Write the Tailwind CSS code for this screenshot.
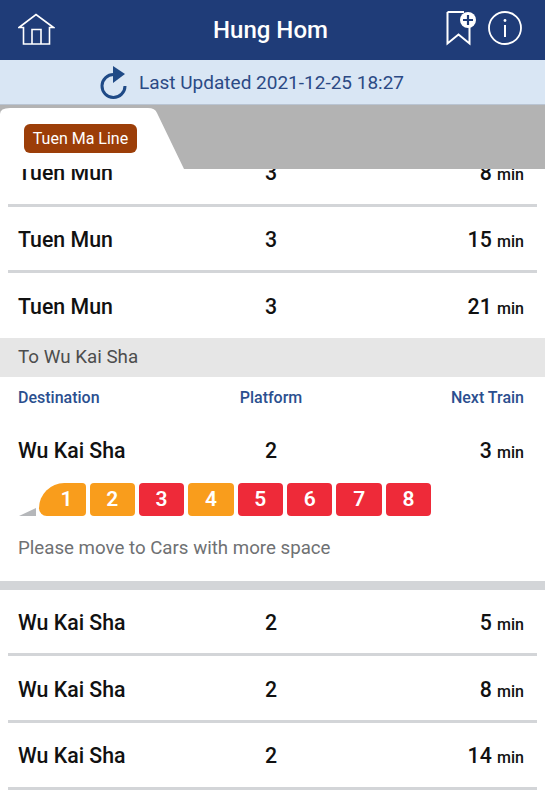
<!DOCTYPE html>
<html lang="en">
<head>
  <meta charset="UTF-8" />
  <meta name="viewport" content="width=device-width, initial-scale=1.0" />
  <title>Hung Hom</title>
  <script src="https://cdn.jsdelivr.net/npm/@tailwindcss/browser@4"></script>
</head>
<body class="bg-white font-[Roboto,sans-serif] w-[545px] h-[800px] overflow-hidden">
  <!-- header -->
  <div class="h-[60px] bg-[#1f3c78] flex items-center justify-between pl-[18px] pr-[23px] relative">
    <svg class="w-[37px] h-[33px] mb-[2px]" viewBox="0 0 37 33" fill="none" stroke="white" stroke-width="1.600">
      <path d="M1 14.500 18 1.500 35.500 14.500H31.500V31H5.500V14.500H1Z" />
      <path d="M14 31V16.500H23V31" />
    </svg>
    <div class="absolute inset-x-0 pr-[4px] text-center text-white text-[24px] font-medium">Hung Hom</div>
    <div class="flex items-center gap-[10px] mb-[4px]">
      <svg class="w-[32px] h-[36px]" viewBox="0 0 32 36" fill="none">
        <path d="M1.500 2H18M23.500 14V33.500L12.500 24.500 1.500 33.500V2" stroke="white" stroke-width="2" />
        <circle cx="22" cy="10" r="8" fill="white" />
        <path d="M22 5V15M17 10H27" stroke="#1f3c78" stroke-width="2.200" />
      </svg>
      <svg class="w-[34px] h-[34px]" viewBox="0 0 34 34" fill="none">
        <circle cx="17" cy="17" r="16" stroke="white" stroke-width="1.800" />
        <circle cx="17" cy="9.500" r="1.400" fill="white" />
        <path d="M17 14V26" stroke="white" stroke-width="2" />
      </svg>
    </div>
  </div>

  <!-- last updated -->
  <div class="h-[45px] bg-[#d9e6f4] flex items-center pl-[99px] gap-[10px] text-[#2b4a85] text-[19px] border-b border-[#b9c4d2]">
    <svg class="w-[30px] h-[35px]" viewBox="0 0 30 35" fill="none">
      <path d="M15 9.500A11.500 11.500 0 1 0 26 21" stroke="#1f4a86" stroke-width="3" />
      <path d="M14 1 26 9 14 18Z" fill="#1f4a86" />
    </svg>
    <span class="pt-[2px]">Last Updated 2021-12-25 18:27</span>
  </div>

  <!-- line tab -->
  <div class="h-[64px] bg-[#b3b3b3] relative">
    <svg class="absolute inset-0 w-[545px] h-[64px]" viewBox="0 0 545 64" fill="white">
      <path d="M0 9Q0 3 10 3H148Q155 3 157 8L184 64H0Z" />
    </svg>
    <div class="absolute left-[24px] top-[19px] h-[29px] w-[113px] rounded-[6px] bg-[#9c3e08] text-white text-[16px] flex items-center justify-center">Tuen Ma Line</div>
  </div>

  <!-- trains -->
  <div class="h-[631px] overflow-hidden">
    <div class="mt-[-29px]">
      <div class="mx-2 h-[66.500px] pt-[3px] border-b-[3px] border-[#d3d5d8] grid grid-cols-[1fr_auto_1fr] items-center pl-[10px] pr-[13px] text-[21.300px] font-medium text-[#111]">
        <span>Tuen Mun</span><span>3</span><span class="text-right">8 <span class="text-[16px]">min</span></span>
      </div>
      <div class="mx-2 h-[66.500px] pt-[3px] border-b-[3px] border-[#d3d5d8] grid grid-cols-[1fr_auto_1fr] items-center pl-[10px] pr-[13px] text-[21.300px] font-medium text-[#111]">
        <span>Tuen Mun</span><span>3</span><span class="text-right">15 <span class="text-[16px]">min</span></span>
      </div>
      <div class="mx-2 h-[65px] pt-[2px] grid grid-cols-[1fr_auto_1fr] items-center pl-[10px] pr-[13px] text-[21.300px] font-medium text-[#111]">
        <span>Tuen Mun</span><span>3</span><span class="text-right">21 <span class="text-[16px]">min</span></span>
      </div>

      <div class="h-[39px] bg-[#e6e6e6] flex items-center px-[18px] text-[18.800px] text-[#4d4d4d]">To Wu Kai Sha</div>
      <div class="h-[40px] pt-[2px] grid grid-cols-[1fr_auto_1fr] items-center pl-[18px] pr-[21px] text-[16px] font-medium text-[#2b4f8f]">
        <span>Destination</span><span>Platform</span><span class="text-right">Next Train</span>
      </div>

      <div class="mx-2 h-[66px] pt-[2px] grid grid-cols-[1fr_auto_1fr] items-center pl-[10px] pr-[13px] text-[21.300px] font-medium text-[#111]">
        <span>Wu Kai Sha</span><span>2</span><span class="text-right">3 <span class="text-[16px]">min</span></span>
      </div>

      <!-- car loading -->
      <div class="flex items-end pl-[18.500px]">
        <div class="w-0 h-0 mr-[3px] border-l-[17px] border-l-transparent border-b-[8px] border-b-[#b5b7ba]"></div>
        <div class="flex gap-[4px] text-white text-[21px] font-semibold">
          <div class="w-[47px] h-[33px] rounded-[4px] rounded-tl-[26px] rounded-bl-[8px] bg-[#f99d1c] flex items-center justify-center pl-[9px]">1</div>
          <div class="w-[45.400px] h-[33px] rounded-[4px] bg-[#f99d1c] flex items-center justify-center">2</div>
          <div class="w-[45.400px] h-[33px] rounded-[4px] bg-[#ee2a39] flex items-center justify-center">3</div>
          <div class="w-[45.400px] h-[33px] rounded-[4px] bg-[#f99d1c] flex items-center justify-center">4</div>
          <div class="w-[45.400px] h-[33px] rounded-[4px] bg-[#ee2a39] flex items-center justify-center">5</div>
          <div class="w-[45.400px] h-[33px] rounded-[4px] bg-[#ee2a39] flex items-center justify-center">6</div>
          <div class="w-[45.400px] h-[33px] rounded-[4px] bg-[#ee2a39] flex items-center justify-center">7</div>
          <div class="w-[45.400px] h-[33px] rounded-[4px] bg-[#ee2a39] flex items-center justify-center">8</div>
        </div>
      </div>
      <div class="h-[65px] flex items-center px-[18px] text-[18.700px] text-[#6f7173]">Please move to Cars with more space</div>
      <div class="h-[9px] bg-[#d3d5d8]"></div>

      <div class="mx-2 h-[66.300px] pt-[2px] border-b-[3px] border-[#d3d5d8] grid grid-cols-[1fr_auto_1fr] items-center pl-[10px] pr-[13px] text-[21.300px] font-medium text-[#111]">
        <span>Wu Kai Sha</span><span>2</span><span class="text-right">5 <span class="text-[16px]">min</span></span>
      </div>
      <div class="mx-2 h-[66.700px] pt-[3px] border-b-[3px] border-[#d3d5d8] grid grid-cols-[1fr_auto_1fr] items-center pl-[10px] pr-[13px] text-[21.300px] font-medium text-[#111]">
        <span>Wu Kai Sha</span><span>2</span><span class="text-right">8 <span class="text-[16px]">min</span></span>
      </div>
      <div class="mx-2 h-[66.700px] pt-[2px] border-b-[3px] border-[#d3d5d8] grid grid-cols-[1fr_auto_1fr] items-center pl-[10px] pr-[13px] text-[21.300px] font-medium text-[#111]">
        <span>Wu Kai Sha</span><span>2</span><span class="text-right">14 <span class="text-[16px]">min</span></span>
      </div>
    </div>
  </div>
</body>
</html>
